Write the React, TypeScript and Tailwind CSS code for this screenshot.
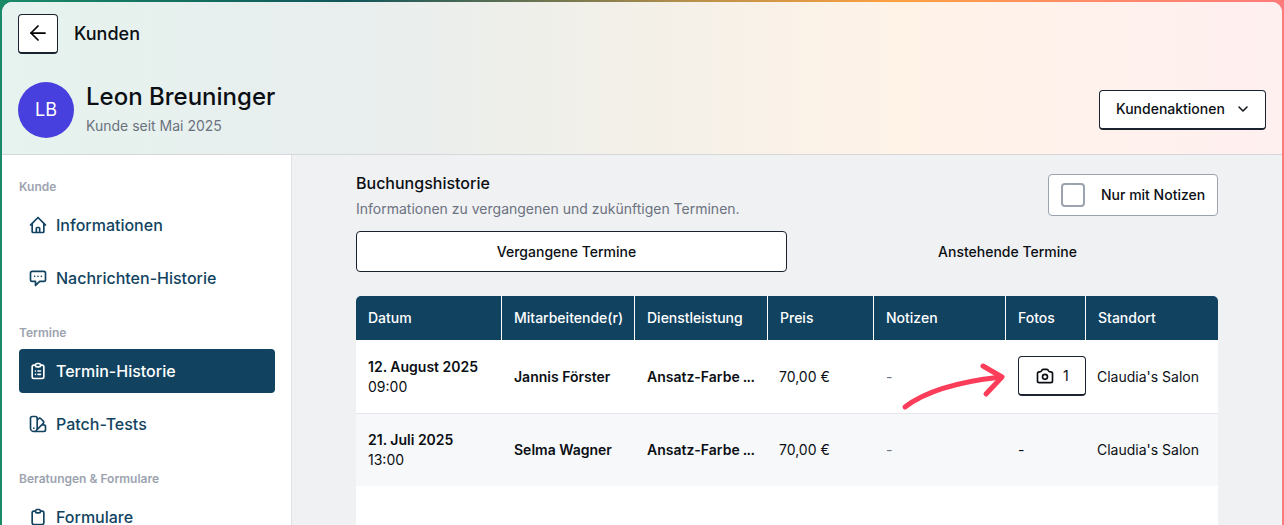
import React from 'react';
import { ArrowLeft, ChevronDown } from 'lucide-react';
import { HiOutlineHome, HiOutlineChatAlt, HiOutlineClipboardList, HiOutlineColorSwatch, HiOutlineClipboard, HiOutlineCamera } from 'react-icons/hi';

const NAV = [
  { title: 'Kunde', items: [{ label: 'Informationen', icon: HiOutlineHome }, { label: 'Nachrichten-Historie', icon: HiOutlineChatAlt }] },
  { title: 'Termine', items: [{ label: 'Termin-Historie', icon: HiOutlineClipboardList, active: true }, { label: 'Patch-Tests', icon: HiOutlineColorSwatch }] },
  { title: 'Beratungen & Formulare', items: [{ label: 'Formulare', icon: HiOutlineClipboard }] },
];

const COLS = 'grid grid-cols-[146px_133px_133px_106px_132px_80px_1fr]';
const HEADS = ['Datum', 'Mitarbeitende(r)', 'Dienstleistung', 'Preis', 'Notizen', 'Fotos', 'Standort'];

const ROWS = [
  { date: '12. August 2025', time: '09:00', staff: 'Jannis Förster', photos: 1 },
  { date: '21. Juli 2025', time: '13:00', staff: 'Selma Wagner', photos: 0 },
];

export default function App() {
  return (
    <div className="h-[525px] overflow-hidden bg-[linear-gradient(90deg,#1a8a68_0%,#14705f_14%,#10555c_27%,#7d7a4f_45%,#b8914a_54%,#ffa040_70%,#ff8a68_85%,#ff7a7a_100%)] pt-[2px] px-[2px] font-['Inter',sans-serif] text-[#0b0f14]">
      <div className="flex h-full flex-col overflow-hidden rounded-t-[10px] bg-white">
        <header className="h-[153px] shrink-0 border-b border-[#d5d7db] bg-[linear-gradient(90deg,#e6f3ee_0%,#e8eeee_27%,#f3f0e8_50%,#fff3e8_70%,#fff0f0_100%)] pl-4 pr-[2px]">
          <div className="flex items-center gap-4 pt-3">
            <button className="flex h-10 w-10 items-center justify-center rounded border border-[#1a2230] border-b-2 bg-white pb-px">
              <ArrowLeft className="h-6 w-6 text-black" strokeWidth={1.75} />
            </button>
            <span className="text-lg font-medium">Kunden</span>
          </div>
          <div className="mt-[28px] flex h-14 items-center">
            <div className="flex h-14 w-14 items-center justify-center rounded-full bg-[#4840de] text-lg text-white">LB</div>
            <div className="ml-3 flex-1 pb-[3px]">
              <div className="mb-[3px] text-2xl leading-8 font-medium">Leon Breuninger</div>
              <div className="text-sm leading-5 text-[#6b7280]">Kunde seit Mai 2025</div>
            </div>
            <button className="mr-[14px] flex h-10 w-[167px] items-center gap-[10px] rounded border border-[#1a2230] border-b-2 bg-white pb-px pl-4 text-sm font-medium">
              Kundenaktionen
              <ChevronDown className="h-4 w-4" strokeWidth={2.25} />
            </button>
          </div>
        </header>

        <div className="flex min-h-0 flex-1">
          <aside className="w-[290px] shrink-0 border-r border-[#e1e3e8] bg-white pl-[17px] pr-[16px] pt-[24px]">
            {NAV.map((group) => (
              <div key={group.title} className="mb-[25px]">
                <div className="text-xs leading-4 font-semibold text-[#9ca3af]">{group.title}</div>
                <div className="mt-2 flex flex-col gap-[9px]">
                  {group.items.map((item) => (
                    <div
                      key={item.label}
                      className={`flex h-11 items-center gap-2 rounded pl-[9px] text-base font-medium ${
                        item.active ? 'bg-[#114361] text-white' : 'text-[#114361]'
                      }`}
                    >
                      <item.icon className="h-5 w-5 shrink-0" />
                      {item.label}
                    </div>
                  ))}
                </div>
              </div>
            ))}
          </aside>

          <main className="min-w-0 flex-1 bg-[#f0f1f3] pl-[64px] pr-[64px] pt-[19px]">
            <div className="flex h-[42px] items-start justify-between">
              <div className="-mt-px">
                <div className="text-base leading-5 font-medium">Buchungshistorie</div>
                <div className="mt-[6px] text-sm leading-5 text-[#6b7280]">Informationen zu vergangenen und zukünftigen Terminen.</div>
              </div>
              <label className="flex h-[42px] w-[170px] items-center gap-4 rounded border border-[#9aa3af] bg-white pl-3 text-sm font-medium">
                <span className="h-6 w-6 rounded border-2 border-[#9aa3af] bg-white" />
                Nur mit Notizen
              </label>
            </div>

            <div className="mt-[15px] grid grid-cols-2 text-sm font-medium">
              <div className="flex h-[41px] w-[431px] items-center justify-center rounded border border-[#1a2230] bg-white pr-[10px]">Vergangene Termine</div>
              <div className="flex h-[41px] items-center justify-center pl-[10px]">Anstehende Termine</div>
            </div>

            <div className="relative mt-6 overflow-hidden rounded-t-[5px] bg-white pb-20">
              <div className={`${COLS} h-11 bg-[#114361] text-sm font-medium text-white`}>
                {HEADS.map((h, i) => (
                  <div key={h} className={`flex items-center px-3 ${i < 6 ? 'border-r border-white' : ''}`}>{h}</div>
                ))}
              </div>
              {ROWS.map((r, i) => (
                <div key={r.date} className={`${COLS} items-center text-sm ${i === 0 ? 'h-[74px] border-b border-[#e5e7eb] bg-white' : 'h-[72px] bg-[#f7f8fa]'}`}>
                  <div className="px-3 leading-5">
                    <div className="font-semibold">{r.date}</div>
                    <div>{r.time}</div>
                  </div>
                  <div className="px-3 font-semibold">{r.staff}</div>
                  <div className="whitespace-nowrap px-3 font-semibold">
                    Ansatz-Farbe<span className="ml-[3px] tracking-[-0.6px]">...</span>
                  </div>
                  <div className="pl-[11px]">70,00 €</div>
                  <div className="px-3 text-[#6b7280]">-</div>
                  <div className="px-3">
                    {r.photos > 0 ? (
                      <button className="mb-px flex h-10 w-[68px] items-center gap-2 rounded border border-[#1a2230] border-b-2 bg-white pl-4">
                        <HiOutlineCamera className="h-5 w-5" />
                        {r.photos}
                      </button>
                    ) : (
                      '-'
                    )}
                  </div>
                  <div className="pl-[11px]">Claudia's Salon</div>
                </div>
              ))}
              {/* annotation arrow */}
              <svg className="absolute left-[545px] top-[64px]" width="105" height="52" viewBox="0 0 105 52" fill="none">
                <path d="M4 47 C 22 33, 55 22, 100 17" stroke="#fb3d5a" strokeWidth="5" strokeLinecap="round" />
                <path d="M82 6 L 101 17 L 85 34" stroke="#fb3d5a" strokeWidth="5" strokeLinecap="round" strokeLinejoin="round" />
              </svg>
            </div>
          </main>
        </div>
      </div>
    </div>
  );
}
